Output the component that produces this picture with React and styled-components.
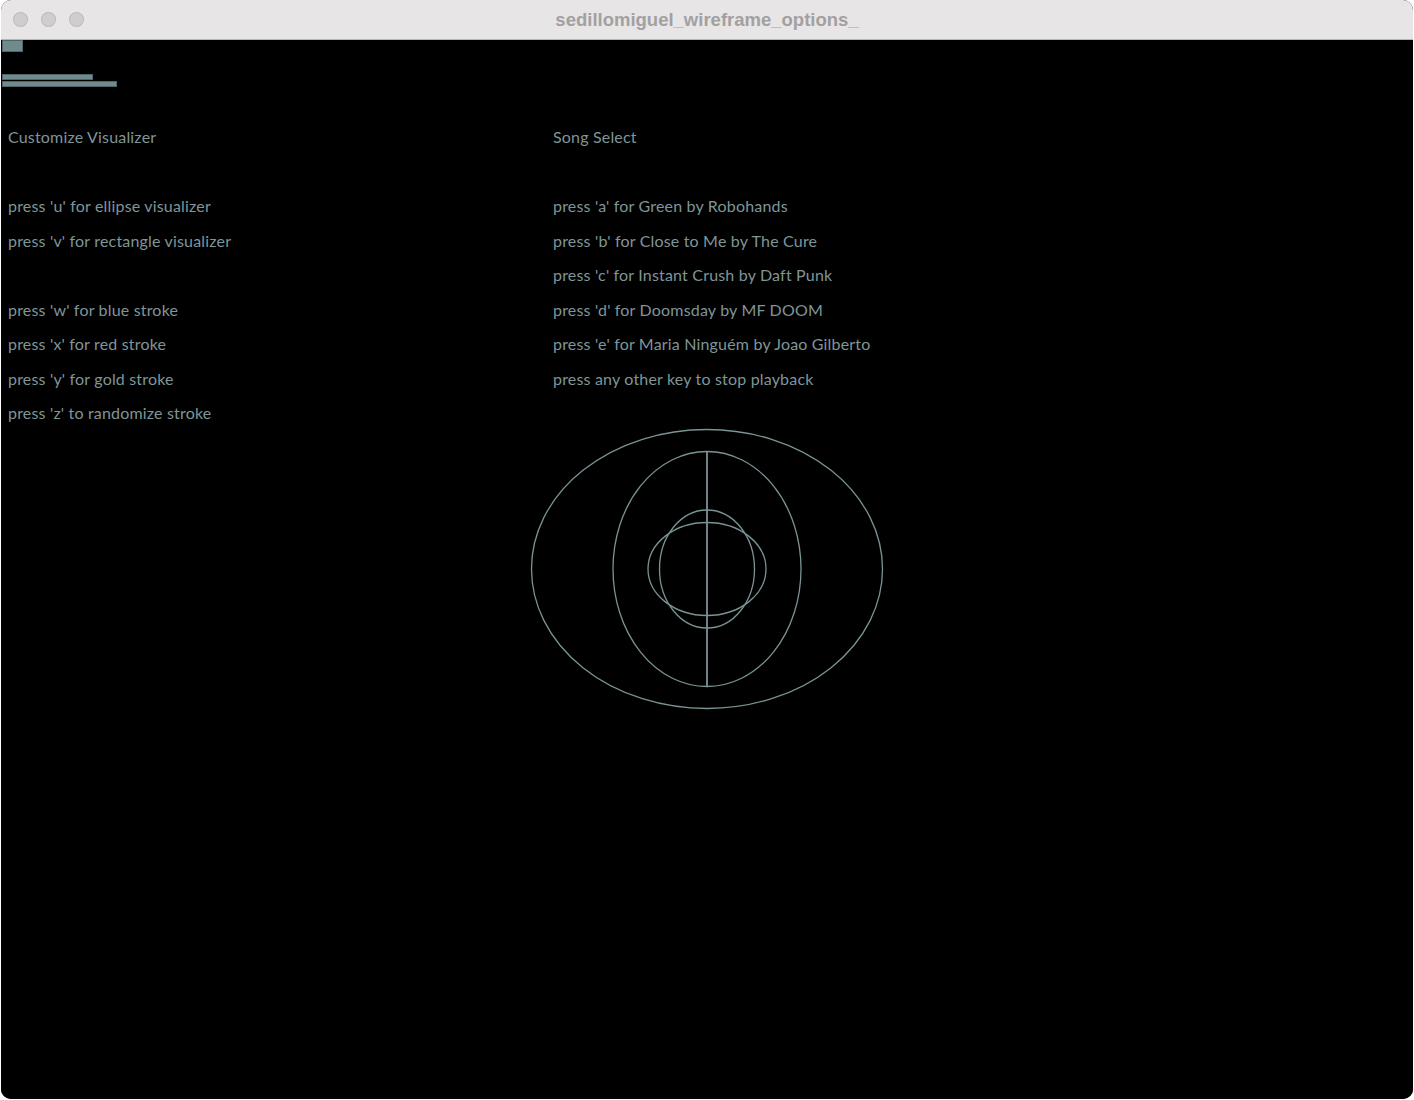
import React from 'react';
import styled, { createGlobalStyle } from 'styled-components';

const leftLines = [
  'Customize Visualizer',
  '',
  "press 'u' for ellipse visualizer",
  "press 'v' for rectangle visualizer",
  '',
  "press 'w' for blue stroke",
  "press 'x' for red stroke",
  "press 'y' for gold stroke",
  "press 'z' to randomize stroke",
];

const rightLines = [
  'Song Select',
  '',
  "press 'a' for Green by Robohands",
  "press 'b' for Close to Me by The Cure",
  "press 'c' for Instant Crush by Daft Punk",
  "press 'd' for Doomsday by MF DOOM",
  "press 'e' for Maria Ninguém by Joao Gilberto",
  'press any other key to stop playback',
];

const STROKE = '#7a9395';

const Visualizer = () => (
  <svg width="360" height="290" viewBox="0 0 360 290">
    <g transform="translate(180 145)" fill="none" stroke={STROKE} strokeWidth="1.3">
      <ellipse cx="0" cy="0" rx="175.5" ry="139.5" />
      <ellipse cx="0" cy="0" rx="94" ry="117.5" />
      <ellipse cx="0" cy="0" rx="59" ry="46.5" />
      <ellipse cx="0" cy="0" rx="47.5" ry="59" />
      <line x1="0" y1="-117.5" x2="0" y2="117.5" strokeWidth="1.8" />
    </g>
  </svg>
);

const App = () => (
  <>
    <GlobalStyle />
    <Window>
      <TitleBar>
        <Lights>
          <Light />
          <Light />
          <Light />
        </Lights>
        <Title>sedillomiguel_wireframe_options_</Title>
      </TitleBar>
      <Canvas>
        <Meters>
          <Block />
          <BarStack>
            <Bar width={91} />
            <Bar width={115} />
          </BarStack>
        </Meters>
        <Columns>
          <Column>
            {leftLines.map((t, i) => (
              <Line key={i}>{t}</Line>
            ))}
          </Column>
          <Column>
            {rightLines.map((t, i) => (
              <Line key={i}>{t}</Line>
            ))}
          </Column>
        </Columns>
        <Stage>
          <Visualizer />
        </Stage>
      </Canvas>
    </Window>
  </>
);

const GlobalStyle = createGlobalStyle`
  html, body {
    margin: 0;
    padding: 0;
    background: #ffffff;
  }
`;

const Window = styled.div`
  display: flex;
  flex-direction: column;
  width: 1412px;
  height: 1099px;
  margin-left: 1px;
  border-radius: 10px;
  overflow: hidden;
  background: #000;
`;

const TitleBar = styled.div`
  position: relative;
  display: flex;
  align-items: center;
  justify-content: center;
  height: 39px;
  flex-shrink: 0;
  background: #e8e5e6;
  border-bottom: 1px solid #b9b6b7;
`;

const Lights = styled.div`
  position: absolute;
  left: 12px;
  top: 12px;
  display: flex;
  gap: 13px;
`;

const Light = styled.span`
  width: 15px;
  height: 15px;
  border-radius: 50%;
  background: #d0cdce;
  box-shadow: inset 0 0 0 1px #c0bdbe;
`;

const Title = styled.span`
  font-family: 'Liberation Sans', Arial, sans-serif;
  font-weight: bold;
  font-size: 18.5px;
  color: #a3a0a1;
`;

const Canvas = styled.div`
  flex: 1;
  display: flex;
  flex-direction: column;
  background: #000;
`;

const Meters = styled.div`
  display: flex;
  flex-direction: column;
  padding: 0 0 0 1px;
  height: 80px;
`;

const Block = styled.div`
  width: 21px;
  height: 12px;
  background: #6f8b8d;
  border: 1px solid #4f6668;
  box-sizing: border-box;
`;

const BarStack = styled.div`
  display: flex;
  flex-direction: column;
  margin-top: 22px;
`;

const Bar = styled.div`
  width: ${(p) => p.width}px;
  height: 6px;
  background: #6f8b8d;
  border: 1px solid #4f6668;
  box-sizing: border-box;
  margin-bottom: 1px;
`;

const Columns = styled.div`
  display: grid;
  grid-template-columns: 545px 1fr;
  padding-left: 7px;
`;

const Column = styled.div`
  display: flex;
  flex-direction: column;
`;

const Line = styled.div`
  height: 34.5px;
  line-height: 34.5px;
  font-family: Lato, 'Noto Sans', sans-serif;
  font-size: 16px;
  letter-spacing: 0.18px;
  color: #7f9598;
  white-space: pre;
`;

const Stage = styled.div`
  display: flex;
  justify-content: center;
  margin-top: -7px;
`;

export default App;
